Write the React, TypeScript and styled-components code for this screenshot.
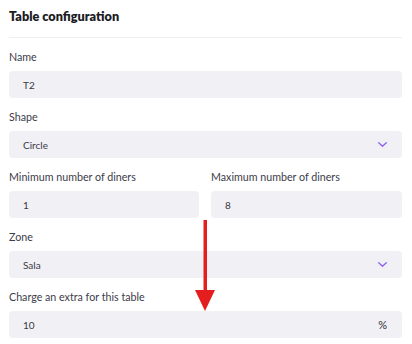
import React from 'react';
import styled, {createGlobalStyle} from 'styled-components';

const GlobalStyle = createGlobalStyle`
  body {
    margin: 0;
    background: #fff;
    font-family: Lato, "Noto Sans", sans-serif;
  }
`;

const Panel = styled.div`
  position: relative;
  width: 412px;
  height: 344px;
  padding: 0 10px 0 9px;
  box-sizing: border-box;
  overflow: hidden;
`;
const Header = styled.div`
  padding: 6px 0 11px;
  border-bottom: 1px solid #eeeef1;
  font-size: 12.7px;
  line-height: 20px;
  font-weight: 800;
  color: #1c1c24;
`;
const Form = styled.div`
  display: flex;
  flex-direction: column;
  gap: 11px;
  padding-top: 11px;
`;
const Row = styled.div`
  display: grid;
  grid-template-columns: 190px 1fr;
  gap: 12px;
`;
const Field = styled.div`
  display: flex;
  flex-direction: column;
  gap: 6px;
`;
const Label = styled.label`
  font-size: 10.7px;
  line-height: 16px;
  color: #3c3c48;
`;
const Box = styled.div`
  display: flex;
  align-items: center;
  justify-content: space-between;
  height: 27px;
  padding: 0 14px;
  border-radius: 4px;
  background: #f1f0f5;
  font-size: 10px;
  color: #3a3a46;
`;
const Suffix = styled.span`
  font-size: 11px;
  color: #2e2e38;
  margin-right: 1px;
`;
const Arrow = styled.div`
  position: absolute;
  left: 195px;
  top: 220px;
  width: 20px;
  height: 92px;
`;

function Chevron() {
  return (
    <svg width="9" height="5" viewBox="0 0 9 5" style={{marginRight: 1}}>
      <path d="M0.7 0.7l3.8 3.6 3.8-3.6" fill="none" stroke="#8b5cf6" strokeWidth="1.2"
            strokeLinecap="round" strokeLinejoin="round"/>
    </svg>
  );
}

function App() {
  return (
    <Panel>
      <GlobalStyle/>
      <Header>Table configuration</Header>
      <Form>
        <Field>
          <Label>Name</Label>
          <Box>T2</Box>
        </Field>
        <Field>
          <Label>Shape</Label>
          <Box>Circle<Chevron/></Box>
        </Field>
        <Row>
          <Field>
            <Label>Minimum number of diners</Label>
            <Box>1</Box>
          </Field>
          <Field>
            <Label>Maximum number of diners</Label>
            <Box>8</Box>
          </Field>
        </Row>
        <Field>
          <Label>Zone</Label>
          <Box>Sala<Chevron/></Box>
        </Field>
        <Field>
          <Label>Charge an extra for this table</Label>
          <Box>10<Suffix>%</Suffix></Box>
        </Field>
      </Form>
      <Arrow>
        <svg width="20" height="92" viewBox="0 0 20 92">
          <rect x="8.5" y="0" width="3.5" height="74" fill="#e41e1e"/>
          <path d="M0 70h20L10 91z" fill="#e41e1e"/>
        </svg>
      </Arrow>
    </Panel>
  );
}

export default App;
